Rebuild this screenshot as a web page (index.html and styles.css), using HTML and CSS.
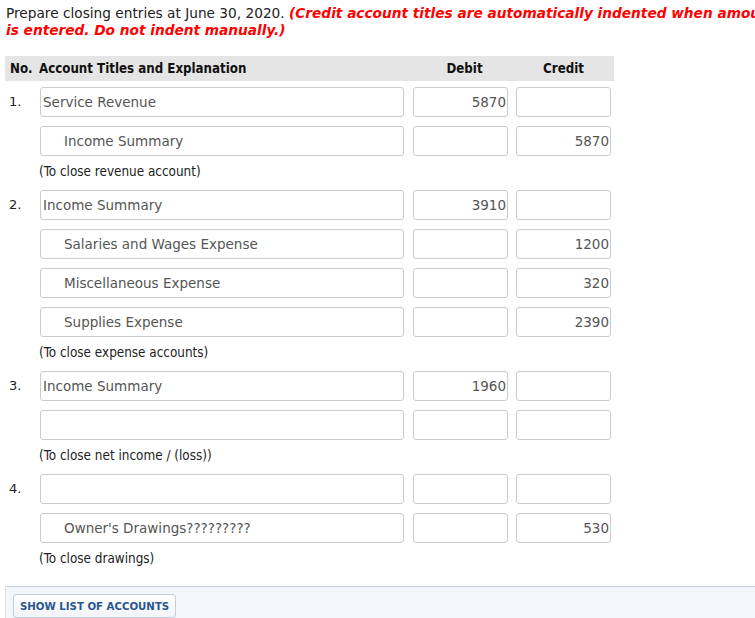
FILE: index.html
```html
<!DOCTYPE html>
<html lang="en">
  <head>
    <meta charset="UTF-8" />
    <meta name="viewport" content="width=device-width, initial-scale=1.0" />
    <title>Closing Entries</title>
    <link rel="stylesheet" href="styles.css">
  </head>

  <body>
    <div class="container">
      <p class="question">
        Prepare closing entries at June 30, 2020.
        <span class="note">(Credit account titles are automatically indented when amount<br />is entered. Do not indent manually.)</span>
      </p>

      <div class="journal">
        <div class="head">
          <div class="col-no">No.</div>
          <div>Account Titles and Explanation</div>
          <div class="center">Debit</div>
          <div class="center">Credit</div>
        </div>

        <!-- Entry 1 -->
        <div class="row">
          <div class="num">1.</div>
          <input class="acct" type="text" value="Service Revenue" />
          <input class="amt" type="text" value="5870" />
          <input class="amt" type="text" value="" />
        </div>
        <div class="row">
          <div class="num"></div>
          <input class="acct indent" type="text" value="Income Summary" />
          <input class="amt" type="text" value="" />
          <input class="amt" type="text" value="5870" />
        </div>
        <div class="explain">(To close revenue account)</div>

        <!-- Entry 2 -->
        <div class="row">
          <div class="num">2.</div>
          <input class="acct" type="text" value="Income Summary" />
          <input class="amt" type="text" value="3910" />
          <input class="amt" type="text" value="" />
        </div>
        <div class="row">
          <div class="num"></div>
          <input class="acct indent" type="text" value="Salaries and Wages Expense" />
          <input class="amt" type="text" value="" />
          <input class="amt" type="text" value="1200" />
        </div>
        <div class="row">
          <div class="num"></div>
          <input class="acct indent" type="text" value="Miscellaneous Expense" />
          <input class="amt" type="text" value="" />
          <input class="amt" type="text" value="320" />
        </div>
        <div class="row">
          <div class="num"></div>
          <input class="acct indent" type="text" value="Supplies Expense" />
          <input class="amt" type="text" value="" />
          <input class="amt" type="text" value="2390" />
        </div>
        <div class="explain">(To close expense accounts)</div>

        <!-- Entry 3 -->
        <div class="row">
          <div class="num">3.</div>
          <input class="acct" type="text" value="Income Summary" />
          <input class="amt" type="text" value="1960" />
          <input class="amt" type="text" value="" />
        </div>
        <div class="row">
          <div class="num"></div>
          <input class="acct" type="text" value="" />
          <input class="amt" type="text" value="" />
          <input class="amt" type="text" value="" />
        </div>
        <div class="explain">(To close net income / (loss))</div>

        <!-- Entry 4 -->
        <div class="row">
          <div class="num">4.</div>
          <input class="acct" type="text" value="" />
          <input class="amt" type="text" value="" />
          <input class="amt" type="text" value="" />
        </div>
        <div class="row">
          <div class="num"></div>
          <input class="acct indent" type="text" value="Owner's Drawings?????????" />
          <input class="amt" type="text" value="" />
          <input class="amt" type="text" value="530" />
        </div>
        <div class="explain">(To close drawings)</div>
      </div>

      <div class="toolbar">
        <button type="button" class="btn-list">Show List of Accounts</button>
      </div>
    </div>
  </body>
</html>
```

FILE: styles.css
```css
body {
  margin: 0;
  padding: 0;
  font-family: "DejaVu Sans", Verdana, sans-serif;
  font-size: 13px;
  color: #222;
  background-color: white;
  overflow: hidden;
}

.container {
  padding: 5px 0 0 5px;
}

.question {
  margin: 0 0 17px 1px;
  line-height: 17px;
  font-size: 13.7px;
  white-space: nowrap;
  overflow: hidden;
  width: 749px;
}

.note {
  color: #f00;
  font-weight: bold;
  font-style: italic;
}

.journal {
  width: 609px;
}

.head {
  display: grid;
  grid-template-columns: 34px 374px 103px 95px;
  background-color: #e5e5e5;
  height: 25px;
  line-height: 25px;
  font-family: "DejaVu Sans Condensed", Tahoma, sans-serif;
  font-weight: bold;
  font-size: 13.2px;
  color: #111;
  margin-bottom: 6px;
}

.col-no {
  padding-left: 5px;
}

.center {
  text-align: center;
}

.row {
  display: grid;
  grid-template-columns: 35px 364px 104px 103px;
  margin-bottom: 9px;
}

.num {
  padding: 7px 0 0 4px;
  line-height: 16px;
  color: #222;
}

input {
  box-sizing: border-box;
  height: 30px;
  width: 100%;
  margin: 0;
  padding: 0 2px;
  border: 1px solid #ccc;
  border-radius: 3px;
  font-family: "DejaVu Sans", Verdana, sans-serif;
  font-size: 13.5px;
  color: #555;
  background-color: white;
}

.indent {
  padding-left: 23px;
}

.amt {
  width: 95px;
  justify-self: end;
  text-align: right;
  padding-right: 1px;
}

.explain {
  padding-left: 34px;
  line-height: 16px;
  margin: -1px 0 10px;
  font-family: "DejaVu Sans Condensed", Tahoma, sans-serif;
  font-size: 13.4px;
  color: #222;
}

.toolbar {
  margin-top: 19px;
  background-color: #f3f7fb;
  border-top: 1px solid #c8d2de;
  border-left: 1px solid #dde4ec;
  padding: 7px 7px 8px;
  height: 40px;
}

.btn-list {
  background: linear-gradient(#ffffff, #f1f4f8);
  border: 1px solid #c5ced9;
  border-radius: 3px;
  padding: 6px 6px 5px;
  font-family: "DejaVu Sans", Verdana, sans-serif;
  font-size: 10.2px;
  font-weight: bold;
  text-transform: uppercase;
  color: #2a568f;
  cursor: pointer;
}
```
